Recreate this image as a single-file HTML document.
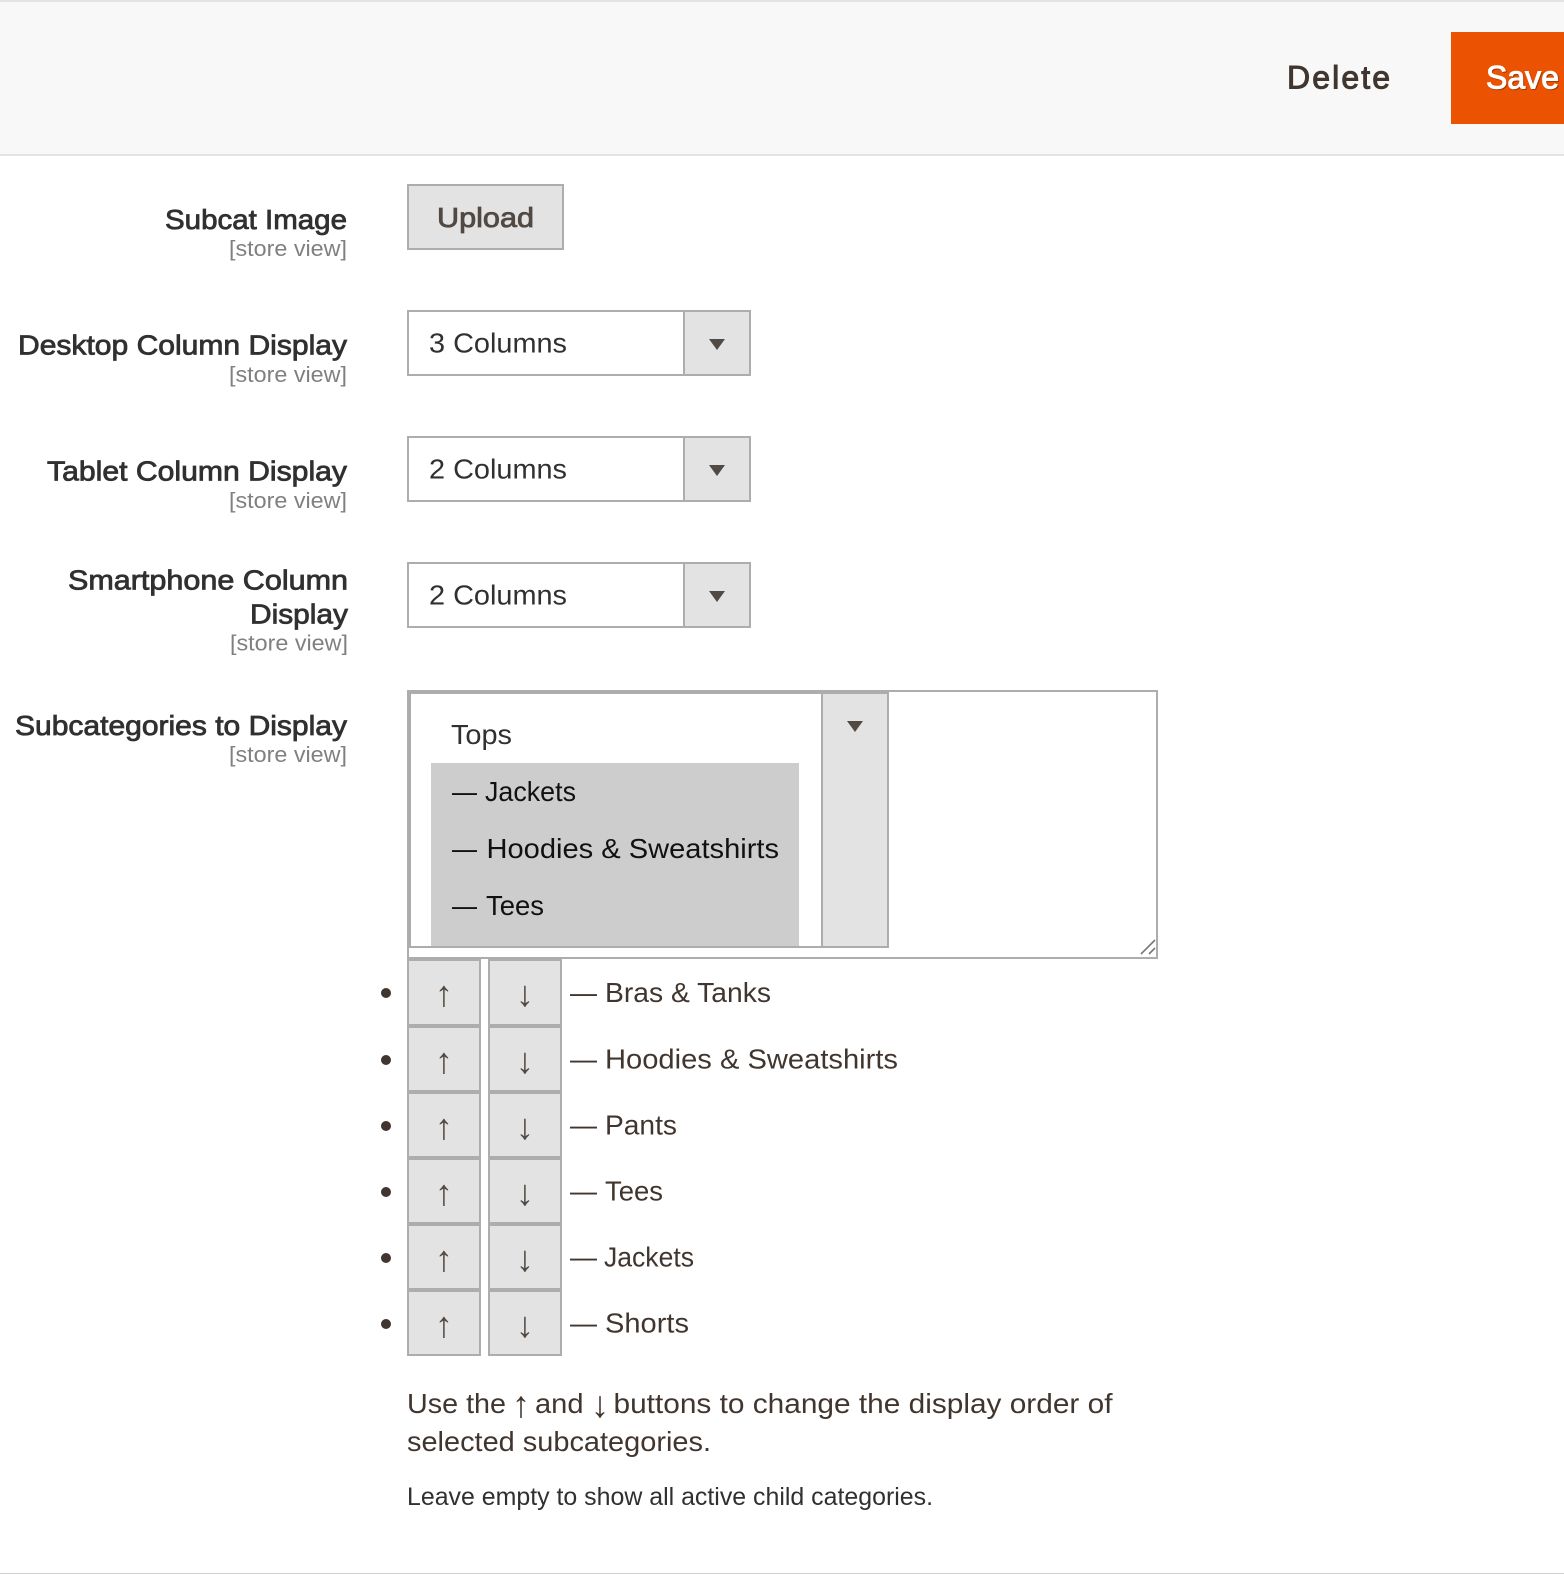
<!DOCTYPE html>
<html lang="en"><head><meta charset="utf-8"><title>Category</title>
<style>
html,body{margin:0;padding:0;background:#fff}
svg{display:block}
text{font-family:"Liberation Sans",Arial,sans-serif;font-size:28px;fill:#41362f;white-space:pre}
.l{fill:#303030;stroke:#303030;stroke-width:.8px}
.s{font-size:22px;fill:#808080}
.v{fill:#303030}
.o{fill:#111}
.a{font-size:36px;fill:#514943;text-anchor:middle}
.box{fill:#e3e3e3;stroke:#adadad;stroke-width:2}
.w{fill:#fff;stroke:#adadad;stroke-width:2}
</style></head>
<body>
<svg xmlns="http://www.w3.org/2000/svg" width="1564" height="1574" viewBox="0 0 1564 1574">
<rect width="1564" height="1574" fill="#fff"/>
<rect y="0" width="1564" height="156" fill="#f8f8f8"/>
<rect y="0" width="1564" height="2" fill="#e3e3e3"/>
<rect y="154" width="1564" height="2" fill="#e3e3e3"/>
<rect y="1573" width="1564" height="1" fill="#cfcfcf"/>
<text x="1287" y="88.500" style="font-size:32px;stroke:#41362f;stroke-width:1px" textLength="103" lengthAdjust="spacing">Delete</text>
<rect x="1451" y="32" width="113" height="92" fill="#eb5202"/>
<text x="1487" y="89.500" style="font-size:32px;fill:#a33a00;stroke:#a33a00;stroke-width:1px" textLength="73" lengthAdjust="spacing">Save</text>
<text x="1486" y="88.500" style="font-size:32px;fill:#fff;stroke:#fff;stroke-width:1px" textLength="73" lengthAdjust="spacing">Save</text>

<text class="l" x="165" y="229" textLength="182" lengthAdjust="spacingAndGlyphs">Subcat Image</text>
<text class="s" x="229" y="256" textLength="118" lengthAdjust="spacingAndGlyphs">[store view]</text>
<rect class="box" x="408" y="185" width="155" height="64"/>
<text x="437" y="227" style="fill:#514943;stroke:#514943;stroke-width:.8px" textLength="97" lengthAdjust="spacingAndGlyphs">Upload</text>

<text class="l" x="18" y="354.500" textLength="329" lengthAdjust="spacingAndGlyphs">Desktop Column Display</text>
<text class="s" x="229" y="382" textLength="118" lengthAdjust="spacingAndGlyphs">[store view]</text>
<rect class="w" x="408" y="311" width="342" height="64"/>
<rect class="box" x="684" y="311" width="66" height="64"/>
<path d="M709 339h16l-8 11z" fill="#514943"/>
<text class="v" x="429" y="352.500" textLength="138" lengthAdjust="spacingAndGlyphs">3 Columns</text>

<text class="l" x="47" y="480.500" textLength="300" lengthAdjust="spacingAndGlyphs">Tablet Column Display</text>
<text class="s" x="229" y="508" textLength="118" lengthAdjust="spacingAndGlyphs">[store view]</text>
<rect class="w" x="408" y="437" width="342" height="64"/>
<rect class="box" x="684" y="437" width="66" height="64"/>
<path d="M709 465h16l-8 11z" fill="#514943"/>
<text class="v" x="429" y="478.500" textLength="138" lengthAdjust="spacingAndGlyphs">2 Columns</text>

<text class="l" x="68" y="589.500" textLength="280" lengthAdjust="spacingAndGlyphs">Smartphone Column</text>
<text class="l" x="250" y="623.500" textLength="98" lengthAdjust="spacingAndGlyphs">Display</text>
<text class="s" x="230" y="650.500" textLength="118" lengthAdjust="spacingAndGlyphs">[store view]</text>
<rect class="w" x="408" y="563" width="342" height="64"/>
<rect class="box" x="684" y="563" width="66" height="64"/>
<path d="M709 591h16l-8 11z" fill="#514943"/>
<text class="v" x="429" y="604.500" textLength="138" lengthAdjust="spacingAndGlyphs">2 Columns</text>

<text class="l" x="15" y="735" textLength="332" lengthAdjust="spacingAndGlyphs">Subcategories to Display</text>
<text class="s" x="229" y="762" textLength="118" lengthAdjust="spacingAndGlyphs">[store view]</text>

<rect class="w" x="408" y="691" width="749" height="267"/>
<rect class="w" x="410" y="693" width="478" height="254"/>
<rect class="box" x="822" y="693" width="66" height="254"/>
<path d="M847 721h16l-8 11z" fill="#514943"/>
<rect x="431" y="763" width="368" height="183" fill="#cdcdcd"/>
<text class="v" x="451" y="744" textLength="61" lengthAdjust="spacingAndGlyphs">Tops</text>
<text class="o" x="452" y="801" textLength="25" lengthAdjust="spacingAndGlyphs">—</text><text class="o" x="485" y="801" textLength="91" lengthAdjust="spacingAndGlyphs">Jackets</text>
<text class="o" x="452" y="858" textLength="25" lengthAdjust="spacingAndGlyphs">—</text><text class="o" x="486.500" y="858" textLength="292.500" lengthAdjust="spacingAndGlyphs">Hoodies &amp; Sweatshirts</text>
<text class="o" x="452" y="915" textLength="25" lengthAdjust="spacingAndGlyphs">—</text><text class="o" x="486" y="915" textLength="58" lengthAdjust="spacingAndGlyphs">Tees</text>
<path d="M1141 954l14-14M1149 954l6-6" stroke="#777" stroke-width="1.600" fill="none"/>

<g>
<circle cx="386" cy="993" r="5" fill="#41362f"/>
<rect class="box" x="408" y="960" width="72" height="65"/><rect class="box" x="489" y="960" width="72" height="65"/>
<text class="a" x="444" y="1006">↑</text><text class="a" x="525" y="1006">↓</text>
<text x="570" y="1002" textLength="27" lengthAdjust="spacingAndGlyphs">—</text><text x="605" y="1002" textLength="166" lengthAdjust="spacingAndGlyphs">Bras &amp; Tanks</text>
</g>
<g>
<circle cx="386" cy="1060" r="5" fill="#41362f"/>
<rect class="box" x="408" y="1027" width="72" height="64"/><rect class="box" x="489" y="1027" width="72" height="64"/>
<text class="a" x="444" y="1073">↑</text><text class="a" x="525" y="1073">↓</text>
<text x="570" y="1068.500" textLength="27" lengthAdjust="spacingAndGlyphs">—</text><text x="605" y="1068.500" textLength="293" lengthAdjust="spacingAndGlyphs">Hoodies &amp; Sweatshirts</text>
</g>
<g>
<circle cx="386" cy="1126" r="5" fill="#41362f"/>
<rect class="box" x="408" y="1093" width="72" height="64"/><rect class="box" x="489" y="1093" width="72" height="64"/>
<text class="a" x="444" y="1139">↑</text><text class="a" x="525" y="1139">↓</text>
<text x="570" y="1134.500" textLength="27" lengthAdjust="spacingAndGlyphs">—</text><text x="605" y="1134.500" textLength="72" lengthAdjust="spacingAndGlyphs">Pants</text>
</g>
<g>
<circle cx="386" cy="1192" r="5" fill="#41362f"/>
<rect class="box" x="408" y="1159" width="72" height="64"/><rect class="box" x="489" y="1159" width="72" height="64"/>
<text class="a" x="444" y="1205">↑</text><text class="a" x="525" y="1205">↓</text>
<text x="570" y="1200.500" textLength="27" lengthAdjust="spacingAndGlyphs">—</text><text x="605" y="1200.500" textLength="58" lengthAdjust="spacingAndGlyphs">Tees</text>
</g>
<g>
<circle cx="386" cy="1258" r="5" fill="#41362f"/>
<rect class="box" x="408" y="1225" width="72" height="64"/><rect class="box" x="489" y="1225" width="72" height="64"/>
<text class="a" x="444" y="1271">↑</text><text class="a" x="525" y="1271">↓</text>
<text x="570" y="1266.500" textLength="27" lengthAdjust="spacingAndGlyphs">—</text><text x="604" y="1266.500" textLength="90" lengthAdjust="spacingAndGlyphs">Jackets</text>
</g>
<g>
<circle cx="386" cy="1324" r="5" fill="#41362f"/>
<rect class="box" x="408" y="1291" width="72" height="64"/><rect class="box" x="489" y="1291" width="72" height="64"/>
<text class="a" x="444" y="1337">↑</text><text class="a" x="525" y="1337">↓</text>
<text x="570" y="1332.500" textLength="27" lengthAdjust="spacingAndGlyphs">—</text><text x="605" y="1332.500" textLength="84" lengthAdjust="spacingAndGlyphs">Shorts</text>
</g>

<text x="407" y="1413" textLength="99" lengthAdjust="spacingAndGlyphs">Use the</text>
<text x="521" y="1417" style="font-size:37px;text-anchor:middle">↑</text>
<text x="535" y="1413" textLength="48.500" lengthAdjust="spacingAndGlyphs">and</text>
<text x="600" y="1417" style="font-size:37px;text-anchor:middle">↓</text>
<text x="613.500" y="1413" textLength="499" lengthAdjust="spacingAndGlyphs">buttons to change the display order of</text>
<text x="407" y="1451" textLength="304" lengthAdjust="spacingAndGlyphs">selected subcategories.</text>
<text x="407" y="1505" style="font-size:25px;fill:#303030" textLength="526" lengthAdjust="spacingAndGlyphs">Leave empty to show all active child categories.</text>
</svg>
</body></html>
